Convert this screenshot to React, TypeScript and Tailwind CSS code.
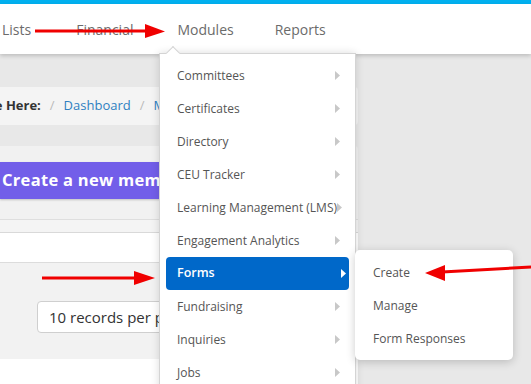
const menuItems = [
  "Committees",
  "Certificates",
  "Directory",
  "CEU Tracker",
  "Learning Management (LMS)",
  "Engagement Analytics",
  "Forms",
  "Fundraising",
  "Inquiries",
  "Jobs",
];

const subItems = ["Create", "Manage", "Form Responses"];

function Caret({ white }: { white?: boolean }) {
  return (
    <svg width="5" height="9" viewBox="0 0 5 9" className="shrink-0">
      <path d="M0 0 L5 4.5 L0 9 Z" fill={white ? "#ffffff" : "#c8c8c8"} />
    </svg>
  );
}

export default function App() {
  return (
    <div className="relative w-[531px] h-[384px] overflow-hidden bg-[#e8e8e8] font-['Open_Sans',sans-serif]">
      {/* top strip */}
      <div className="h-[4px] bg-[#00b0ef]" />

      {/* nav */}
      <div className="h-[50px] bg-white flex items-center text-[14px] text-[#6b6b6b] shadow-[0_2px_4px_rgba(0,0,0,0.18)] relative z-10">
        <span className="ml-[2px]">Lists</span>
        <span className="ml-[45px]">Financial</span>
        <span className="ml-[44px]">Modules</span>
        <span className="ml-[41px]">Reports</span>
      </div>

      {/* page content */}
      <div className="w-[358px] pt-[33px]">
        <div className="h-[38px] bg-[#f4f4f4] rounded-r-[4px] flex items-center text-[13px] whitespace-nowrap overflow-hidden">
          <span className="font-bold text-[#333] ml-[-47px]">You are Here:</span>
          <span className="text-[#bbb] mx-[9px]">/</span>
          <span className="text-[#2f7fc1]">Dashboard</span>
          <span className="text-[#bbb] mx-[9px]">/</span>
          <span className="text-[#2f7fc1]">Modules</span>
        </div>

        <div className="mt-[21px] bg-[#f1f1f1] rounded-tr-[4px]">
          <div className="pt-[16px] pb-[20px]">
            <div className="h-[37px] w-[220px] bg-[#725ee9] flex items-center pl-[2px] text-white font-bold text-[16.5px] tracking-[0.3px] whitespace-nowrap overflow-hidden shadow-[0_1px_2px_rgba(0,0,0,0.2)]">
              Create a new membership
            </div>
          </div>
          <div className="h-[13px] bg-[#f4f4f4] border-t border-[#dedede]" />
          <div className="h-[30px] bg-white border-t border-[#d9d9d9]" />
          <div className="h-[97px] bg-[#f2f2f2] border-t border-[#dcdcdc] pt-[38px] pl-[37px]">
            <div className="w-[200px] h-[32px] bg-white border border-[#cfcfcf] rounded-[4px] flex items-center pl-[11px] text-[15px] text-[#333] whitespace-nowrap overflow-hidden">
              10 records per page
            </div>
          </div>
          <div className="h-[30px] bg-white" />
        </div>
      </div>

      {/* modules dropdown */}
      <div className="absolute left-[159px] top-[53px] w-[197px] h-[340px] bg-white border border-[#d4d4d4] shadow-[0_0_8px_rgba(0,0,0,0.14)] z-20 pt-[5px] px-[6px]">
        <div className="absolute left-[8px] top-[-6px] w-[10px] h-[10px] bg-white border-l border-t border-[#d4d4d4] rotate-45" />
        {menuItems.map((item) => {
          const active = item === "Forms";
          return (
            <div
              key={item}
              className={
                active
                  ? "h-[33px] flex items-center justify-between pl-[11px] pr-[3px] rounded-[4px] bg-[#0068c9] text-white font-semibold text-[12.5px]"
                  : "h-[33px] flex items-center justify-between pl-[11px] pr-[9px] text-[12px] text-[#555]"
              }
            >
              <span className="whitespace-nowrap">{item}</span>
              <Caret white={active} />
            </div>
          );
        })}
      </div>

      {/* forms submenu */}
      <div className="absolute left-[355px] top-[250px] w-[158px] h-[110px] bg-white rounded-[5px] shadow-[0_2px_10px_rgba(0,0,0,0.2)] z-30 flex flex-col pt-[6px] pl-[18px] text-[12px] text-[#555]">
        {subItems.map((s) => (
          <div key={s} className="h-[33px] flex items-center">
            {s}
          </div>
        ))}
      </div>

      {/* annotation arrows */}
      <svg className="absolute inset-0 z-40 pointer-events-none" width="531" height="384">
        <line x1="35" y1="31" x2="148" y2="31" stroke="#f00000" strokeWidth="3" />
        <path d="M145 24 L165 31.5 L145 38 Z" fill="#f00000" />
        <line x1="42" y1="278" x2="138" y2="278" stroke="#f00000" strokeWidth="3" />
        <path d="M134 271 L155 278 L134 285 Z" fill="#f00000" />
        <line x1="531" y1="267" x2="442" y2="272" stroke="#f00000" strokeWidth="3" />
        <path d="M445 265 L425 273 L445 281 Z" fill="#f00000" />
      </svg>
    </div>
  );
}
